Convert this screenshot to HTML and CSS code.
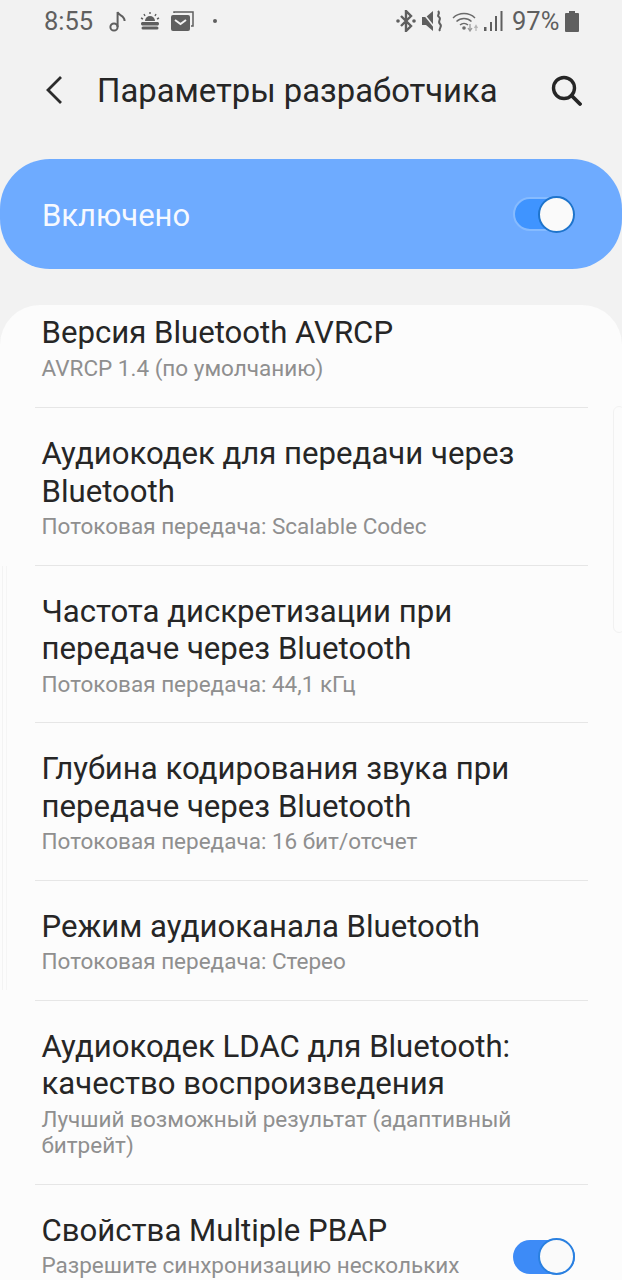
FILE: index.html
```html
<!DOCTYPE html>
<html lang="ru">
<head>
<meta charset="utf-8">
<title>Параметры разработчика</title>
<link rel="stylesheet" href="styles.css">
</head>
<body>
<div class="status">
  <div class="status-group">
    <span class="time">8:55</span>
    <svg class="ic ic-note" width="17" height="22" viewBox="0 0 17 22"><circle cx="5" cy="17" r="3.600" fill="none" stroke="#5f5f5f" stroke-width="2"/><path d="M8.600 17V2c1 4 7 3 7 9" fill="none" stroke="#5f5f5f" stroke-width="2"/></svg>
    <svg class="ic ic-sun" width="20" height="18" viewBox="0 0 20 18"><path d="M5 9a5 5 0 0 1 10 0z" fill="#5f5f5f"/><path d="M10 0v2M4 2l1 2M16 2l-1 2M1 6l2 1M19 6l-2 1" stroke="#5f5f5f" stroke-width="1.400"/><path d="M2 10h16a2 2 0 0 1 0 3.500H2a2 2 0 0 1 0-3.500zM3 14.500h14a1.500 1.500 0 0 1 0 3H3a1.500 1.500 0 0 1 0-3z" fill="#5f5f5f"/></svg>
    <svg class="ic ic-mail" width="23" height="20" viewBox="0 0 23 20"><rect x="0" y="4" width="19" height="16" rx="2" fill="#5f5f5f"/><path d="M4 9l5.500 4L15 9" fill="none" stroke="#f2f2f2" stroke-width="2"/><path d="M3 2V1h19v14h-2" fill="none" stroke="#5f5f5f" stroke-width="1.500"/></svg>
    <span class="dot"></span>
  </div>
  <div class="status-group">
    <svg class="ic" width="20" height="22" viewBox="0 0 20 22"><path d="M5 6l10 10-5 5V1l5 5L5 16" fill="none" stroke="#5f5f5f" stroke-width="2.400"/><circle cx="2" cy="11" r="1.800" fill="#5f5f5f"/><circle cx="18" cy="11" r="1.800" fill="#5f5f5f"/></svg>
    <svg class="ic ic-mute" width="21" height="22" viewBox="0 0 21 22"><path d="M0 7h4l7-6v20l-7-6H0z" fill="#5f5f5f"/><path d="M1 3l12 15" stroke="#f2f2f2" stroke-width="1.500"/><path d="M16 1c3 3-2 4 1 6s-2 4 1 7-2 4 0 7" fill="none" stroke="#5f5f5f" stroke-width="2"/></svg>
    <svg class="ic ic-wifi" width="26" height="22" viewBox="0 0 26 22"><path d="M1 8a16 16 0 0 1 22 0M4.500 11.500a11 11 0 0 1 15 0M8 15a6 6 0 0 1 8 0" fill="none" stroke="#6a6a6a" stroke-width="1.500"/><circle cx="12" cy="18" r="1.800" fill="#6a6a6a"/><path d="M18 14v6M16 18l2 3 2-3" fill="none" stroke="#9a9a9a" stroke-width="1.300"/><path d="M24 21v-5M22.500 18l1.500-2.500 1.500 2.500" fill="none" stroke="#b5b5b5" stroke-width="1.200"/></svg>
    <svg class="ic ic-signal" width="19" height="22" viewBox="0 0 19 22"><rect x="0" y="17" width="2.500" height="4" fill="#5f5f5f"/><rect x="6" y="12" width="2" height="9" fill="#5f5f5f"/><rect x="11" y="6" width="2" height="15" fill="#5f5f5f"/><rect x="16.500" y="1" width="2" height="20" fill="#5f5f5f"/></svg>
    <span class="pct">97%</span>
    <svg class="ic ic-batt" width="14" height="21" viewBox="0 0 14 21"><path d="M4 0h6v2h3a1 1 0 0 1 1 1v17a1 1 0 0 1-1 1H1a1 1 0 0 1-1-1V3a1 1 0 0 1 1-1h3z" fill="#5f5f5f"/></svg>
  </div>
</div>

<header class="appbar">
  <svg class="back" width="18" height="30" viewBox="0 0 18 30"><path d="M16 2L3 15l13 13" fill="none" stroke="#2b2b2b" stroke-width="2.800"/></svg>
  <h1 class="title">Параметры разработчика</h1>
  <svg class="search" width="32" height="32" viewBox="0 0 32 32"><circle cx="14" cy="14" r="10.500" fill="none" stroke="#262626" stroke-width="3.400"/><path d="M21.500 21.500L30 30" stroke="#262626" stroke-width="3.800" stroke-linecap="round"/></svg>
</header>

<section class="master">
  <span class="master-label">Включено</span>
  <span class="toggle toggle-light"><span class="knob"></span></span>
</section>

<main class="card">
  <span class="ghost-left"></span>
  <span class="ghost-right"></span>
  <div class="item item-first">
    <div class="item-title">Версия Bluetooth AVRCP</div>
    <div class="item-sub">AVRCP 1.4 (по умолчанию)</div>
  </div>
  <div class="item">
    <div class="item-title">Аудиокодек для передачи через Bluetooth</div>
    <div class="item-sub">Потоковая передача: Scalable Codec</div>
  </div>
  <div class="item">
    <div class="item-title">Частота дискретизации при передаче через Bluetooth</div>
    <div class="item-sub">Потоковая передача: 44,1 кГц</div>
  </div>
  <div class="item">
    <div class="item-title">Глубина кодирования звука при передаче через Bluetooth</div>
    <div class="item-sub">Потоковая передача: 16 бит/отсчет</div>
  </div>
  <div class="item">
    <div class="item-title">Режим аудиоканала Bluetooth</div>
    <div class="item-sub">Потоковая передача: Стерео</div>
  </div>
  <div class="item">
    <div class="item-title">Аудиокодек LDAC для Bluetooth: качество воспроизведения</div>
    <div class="item-sub">Лучший возможный результат (адаптивный битрейт)</div>
  </div>
  <div class="item item-switch">
    <div class="item-text">
      <div class="item-title">Свойства Multiple PBAP</div>
      <div class="item-sub">Разрешите синхронизацию нескольких</div>
    </div>
    <span class="toggle toggle-item"><span class="knob"></span></span>
  </div>
</main>
</body>
</html>
```

FILE: styles.css
```css
* { box-sizing: border-box; }
html, body { margin: 0; height: 1280px; overflow: hidden; }
body {
  background: #f2f2f2;
  font-family: Roboto, "Noto Sans", sans-serif;
  display: flex;
  flex-direction: column;
}
.status {
  height: 42px;
  flex: none;
  padding: 0 43px 0 44px;
  display: flex;
  justify-content: space-between;
  align-items: center;
  color: #5f5f5f;
}
.status-group { display: flex; align-items: center; }
.ic { display: block; flex: none; }
.time { font-size: 25.500px; width: 49px; }
.ic-note { margin-left: 16px; }
.ic-sun { margin-left: 14px; }
.ic-mail { margin-left: 11px; }
.dot { width: 4px; height: 4px; border-radius: 50%; background: #5f5f5f; margin-left: 19px; }
.ic-mute { margin-left: 6px; }
.ic-wifi { margin-left: 9px; }
.ic-signal { margin-left: 6px; }
.pct { font-size: 25.500px; margin-left: 9px; width: 47px; white-space: nowrap; }
.ic-batt { margin-left: 6px; }

.appbar {
  height: 98px;
  flex: none;
  display: flex;
  align-items: center;
  padding: 0 40px 2px 45px;
  margin-bottom: 19px;
}
.back { flex: none; }
.title {
  margin: 2px 0 0 34px;
  font-size: 32.800px;
  font-weight: 400;
  color: #262626;
  flex: 1;
  white-space: nowrap;
}
.search { flex: none; }

.master {
  height: 110px;
  flex: none;
  background: #6eabff;
  border-radius: 50px;
  display: flex;
  align-items: center;
  justify-content: space-between;
  padding: 0 47px 0 42px;
  margin-bottom: 36px;
}
.master-label { font-size: 31px; color: #f6f9ff; margin-top: 3px; }

.toggle {
  display: flex;
  align-items: center;
  justify-content: flex-end;
  width: 62px;
  height: 34px;
  border-radius: 17px;
  flex: none;
}
.knob {
  flex: none;
  width: 37px;
  height: 37px;
  border-radius: 50%;
  background: #fafafa;
}
.toggle-light { background: #3f94ff; border: 2px solid #86bbff; }
.toggle-light .knob { border: 2px solid #1e74cc; margin-right: -2px; }
.toggle-item { background: #3d8bf7; }
.toggle-item .knob { border: 2px solid #2a80e0; }

.card {
  position: relative;
  flex: 1;
  min-height: 0;
  overflow: hidden;
  background: #fcfcfc;
  border-radius: 40px 40px 0 0;
  padding: 0 34px 0 35px;
}
.ghost-left {
  position: absolute;
  left: 2px;
  top: 261px;
  width: 5px;
  height: 424px;
  border-left: 1px solid #f3f3f3;
  border-right: 1px solid #f5f5f5;
}
.ghost-right {
  position: absolute;
  left: 613px;
  top: 101px;
  width: 12px;
  height: 227px;
  border: 1px solid #f1f1f1;
  border-radius: 6px;
}
.item {
  padding: 27px 7px 25px 6.500px;
  border-bottom: 1px solid #e6e6e6;
}
.item-first { padding-top: 9px; padding-bottom: 26px; }
.item-title {
  font-size: 31.150px;
  line-height: 37.500px;
  color: #262626;
}
.item-sub {
  font-size: 22.500px;
  line-height: 26.500px;
  margin-top: 3px;
  color: #8f8f8f;
}
.item-switch {
  display: flex;
  align-items: flex-start;
  justify-content: space-between;
  padding-right: 13px;
  border-bottom: 0;
}
.item-text { flex: none; }
.toggle-item { margin-top: 28px; }
```
